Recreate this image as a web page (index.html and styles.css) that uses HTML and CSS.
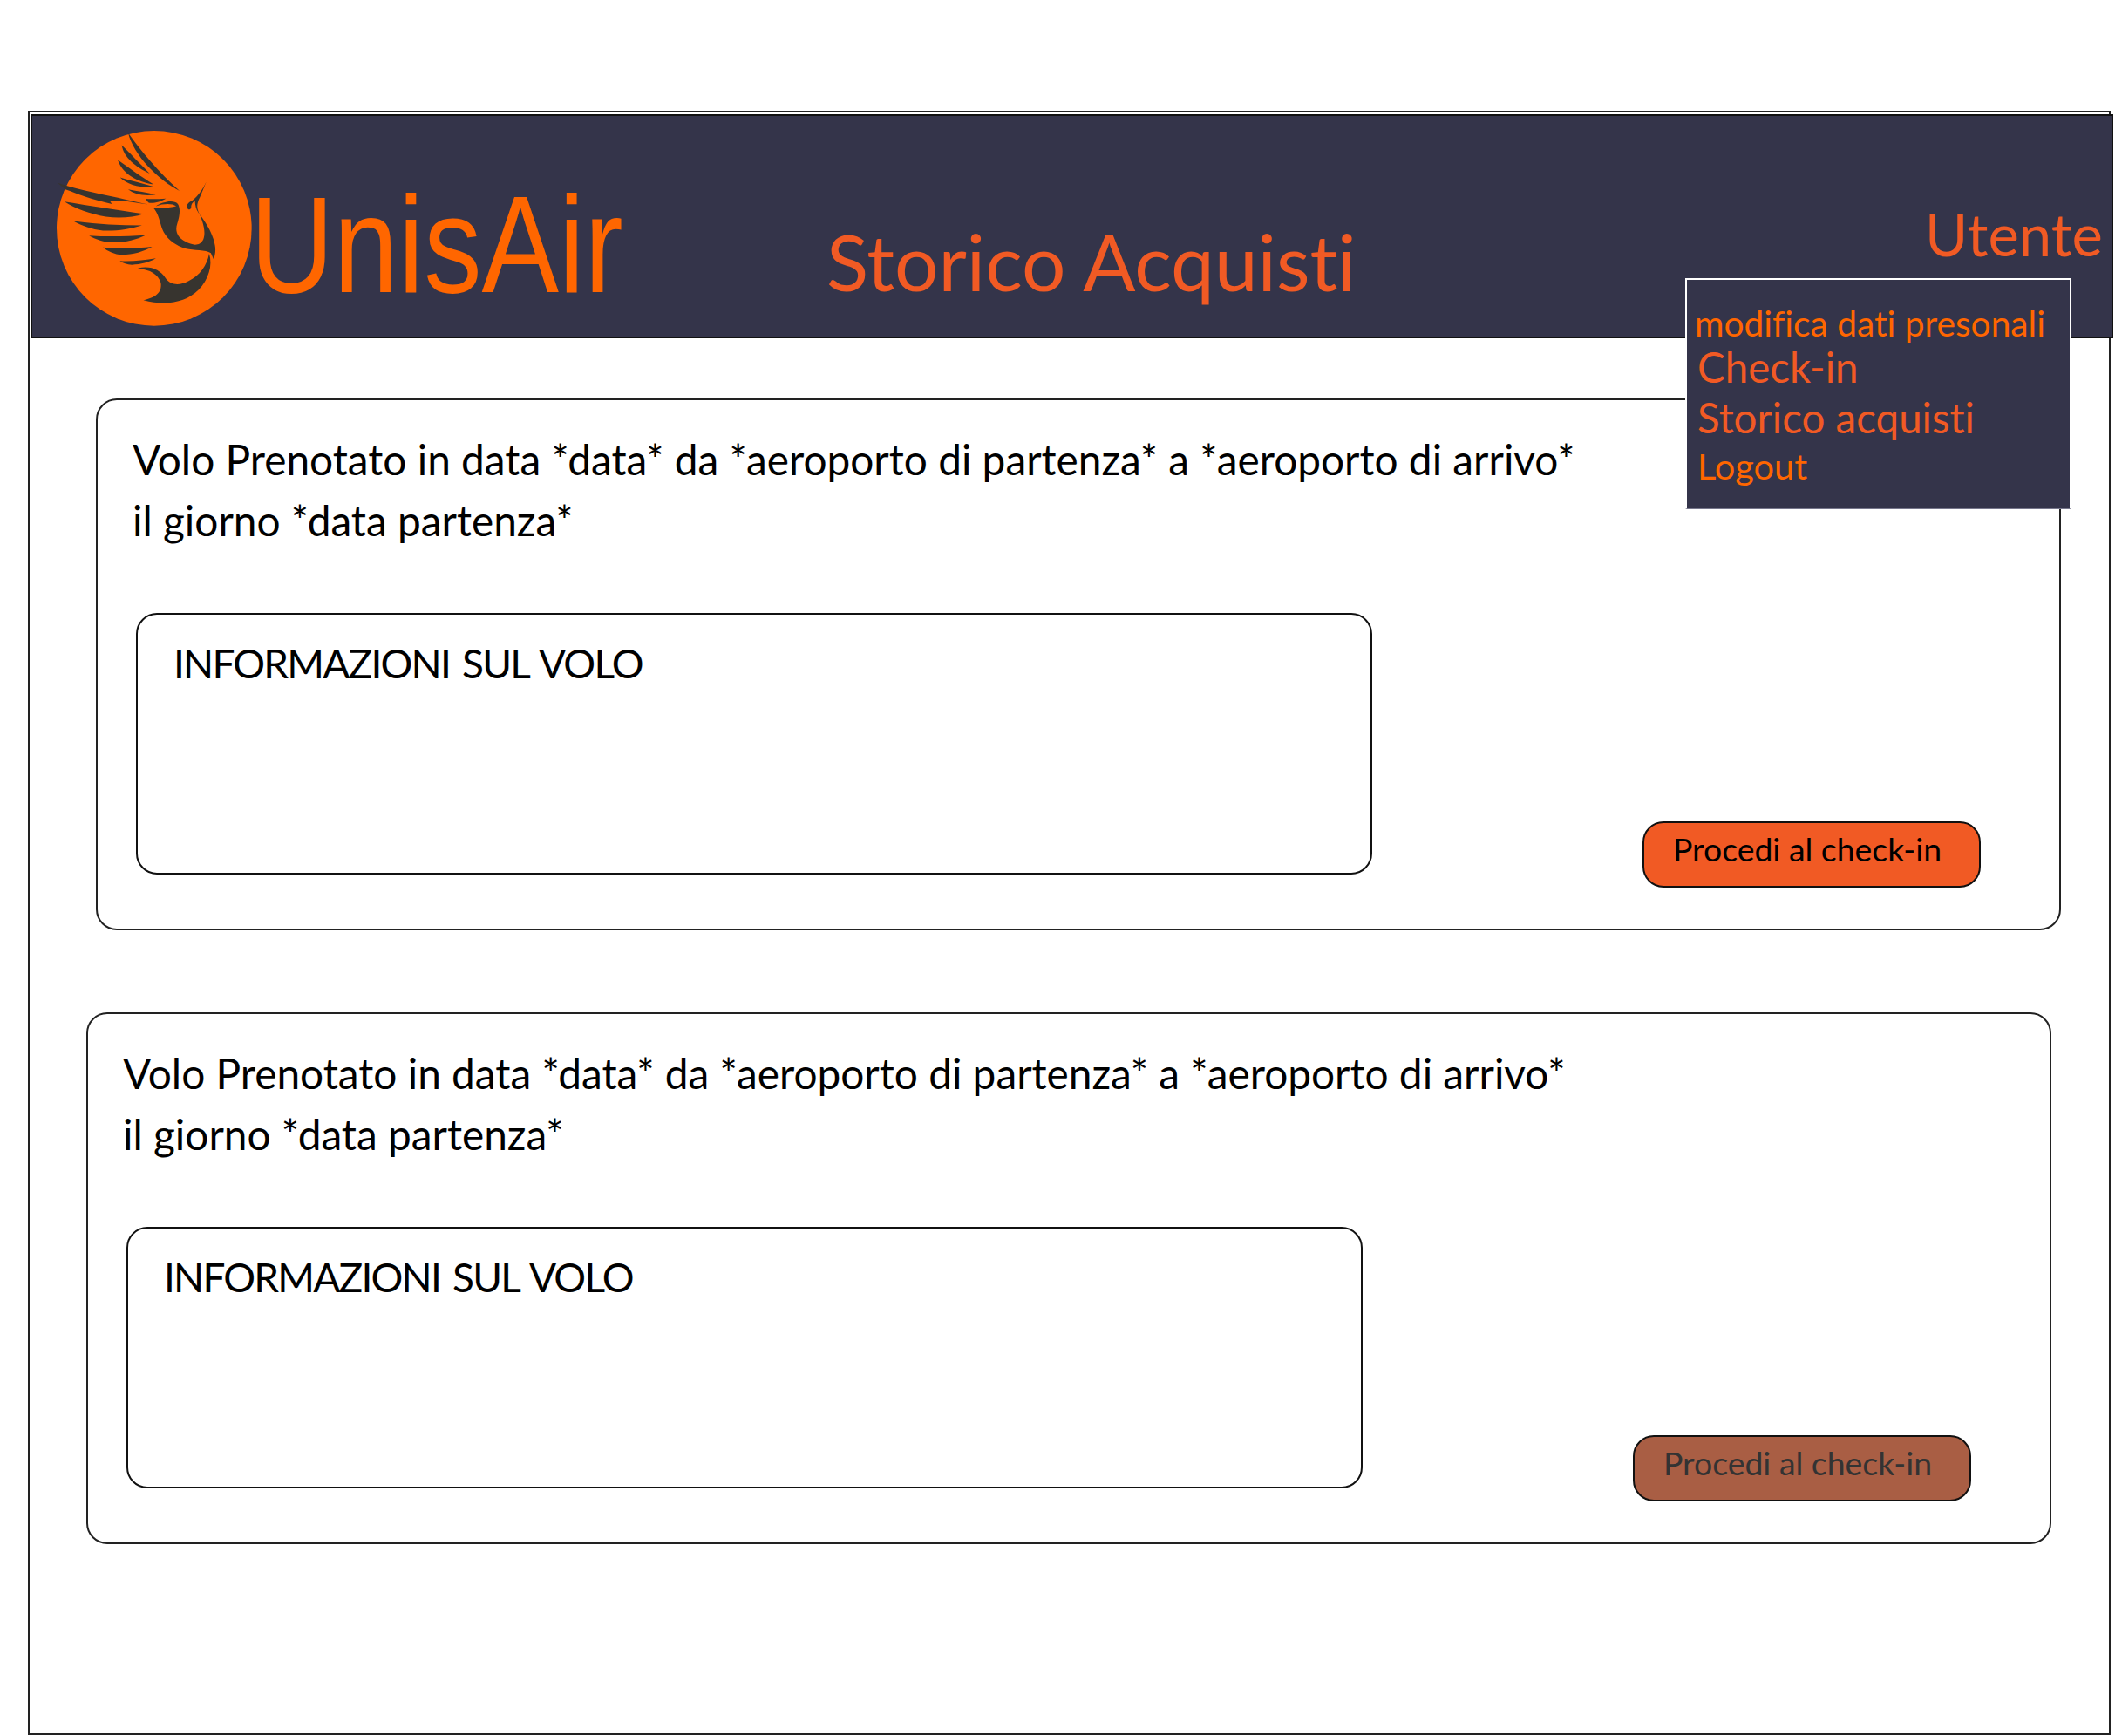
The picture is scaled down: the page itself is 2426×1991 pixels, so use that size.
FILE: index.html
```html
<!DOCTYPE html>
<html lang="it">
<head>
<meta charset="UTF-8" />
<meta name="viewport" content="width=device-width, initial-scale=1" />
<title>UnisAir - Storico Acquisti</title>
<link rel="stylesheet" href="styles.css">
</head>
<body>
<div class="frame">
  <header class="header">
    <svg class="logo" viewBox="45 55 675 675" aria-label="UnisAir logo">
      <circle cx="382" cy="392" r="337" fill="#ff6600"/>
      <g fill="#37342f">
        <path d="M292 62C335 125 400 200 470 263C400 228 310 140 292 62Z"/>
        <path d="M270 105C295 130 330 165 366 203C318 180 276 147 270 105Z"/>
        <path d="M256 155C290 180 335 212 380 240C325 232 272 205 256 155Z"/>
        <path d="M264 216C305 228 345 238 384 249C340 254 288 242 264 216Z"/>
        <path d="M292 258C325 264 355 268 387 276C350 282 315 276 292 258Z"/>
        <path d="M352 290C375 292 400 290 423 289C405 300 375 308 362 303Z"/>
        <path d="M48 235C130 262 210 275 285 293L360 310L285 298L228 296L236 308C170 295 115 272 75 258Z"/>
        <path d="M72 300C160 315 260 330 345 342C310 355 260 358 215 352C160 342 110 325 72 300Z"/>
        <path d="M103 367C180 378 260 382 340 382C300 395 250 402 205 400C165 395 130 383 103 367Z"/>
        <path d="M157 417C220 422 285 420 352 416C320 432 280 442 240 441C210 440 178 430 157 417Z"/>
        <path d="M205 458C260 464 320 462 375 456C345 472 310 484 270 484C245 482 222 472 205 458Z"/>
        <path d="M263 505C305 507 348 503 388 496C365 510 335 517 305 518C288 518 274 512 263 505Z"/>
        <path d="M325 530C370 520 402 535 422 565C440 590 470 590 500 575C540 555 565 520 572 480C585 520 570 570 535 605C490 650 420 660 345 640C385 632 410 615 405 580C395 550 370 535 325 530Z"/>
        <path d="M378 320C410 322 440 322 458 316C445 306 415 306 388 316C410 300 450 292 464 308C474 325 470 350 462 375C452 405 465 425 490 438C515 452 540 455 552 430C562 405 550 365 535 335C528 318 530 305 540 285L568 218C556 250 535 280 515 295C498 302 488 318 500 326C506 328 510 325 510 318C510 310 515 300 523 298C524 312 526 325 535 338C560 370 585 410 592 450C596 470 592 485 588 500L578 478C560 465 520 470 490 462C460 452 432 435 415 405C400 378 402 345 378 320Z"/>
      </g>
    </svg>
    <div class="brand">UnisAir</div>
    <h1 class="page-title">Storico Acquisti</h1>
    <div class="user">Utente</div>
  </header>

  <nav class="menu">
    <a class="menu-small">modifica dati presonali</a>
    <a class="menu-big">Check-in</a>
    <a class="menu-big">Storico acquisti</a>
    <a class="menu-logout">Logout</a>
  </nav>

  <section class="card card-first">
    <p class="summary">Volo Prenotato in data *data* da *aeroporto di partenza* a *aeroporto di arrivo*<br>il giorno *data partenza*</p>
    <div class="row">
      <div class="info">INFORMAZIONI SUL VOLO</div>
      <button class="checkin">Procedi al check-in</button>
    </div>
  </section>

  <section class="card card-second">
    <p class="summary">Volo Prenotato in data *data* da *aeroporto di partenza* a *aeroporto di arrivo*<br>il giorno *data partenza*</p>
    <div class="row">
      <div class="info">INFORMAZIONI SUL VOLO</div>
      <button class="checkin disabled">Procedi al check-in</button>
    </div>
  </section>
</div>
</body>
</html>
```
FILE: styles.css
```css
:root {
  --navy: #34344a;
  --orange: #ff6600;
  --red-orange: #f15a24;
  --font: 'Lato', 'Open Sans', sans-serif;
}

* {
  box-sizing: border-box;
}

body {
  margin: 0;
  background: #fff;
  color: #000;
  font-family: var(--font);
  font-variant-ligatures: none;
}

.frame {
  position: relative;
  width: 2389px;
  height: 1863px;
  margin: 127px 0 0 32px;
  padding-top: 2px;
  border: 2px solid #222;
}

/* header is a bit wider than the frame, like in the mockup */
.header {
  display: flex;
  align-items: flex-start;
  width: 2388px;
  height: 257px;
  margin-left: 2px;
  background: var(--navy);
  border: 2px solid #111;
  border-left-width: 1px;
}

.logo {
  flex: none;
  width: 224px;
  height: 224px;
  margin: 17px 1px 0 28px;
}

.brand {
  flex: none;
  width: 416px;
  margin: 56px 0 0 -3px;
  color: var(--orange);
  font-family: 'Liberation Sans', sans-serif;
  font-size: 158px;
  line-height: 182px;
  transform: scaleX(0.84);
  transform-origin: left top;
}

.page-title {
  margin: 117px 0 0 245px;
  color: var(--red-orange);
  font-size: 89px;
  font-weight: 400;
  line-height: 100px;
}

.user {
  margin: 95px 0 0 auto;
  padding-right: 10px;
  color: var(--red-orange);
  font-size: 67px;
  line-height: 80px;
}

.menu {
  position: absolute;
  z-index: 2;
  top: 190px;
  left: 1899px;
  display: flex;
  flex-direction: column;
  width: 443px;
  height: 265px;
  padding: 29px 9px 0;
  background: var(--navy);
  border: 2px solid #fff;
  border-bottom-width: 1px;
  border-bottom-color: #77778c;
}

.menu-small {
  color: var(--orange);
  font-size: 40.7px;
  line-height: 42px;
}

.menu-big {
  padding-left: 3px;
  color: var(--red-orange);
  font-size: 47.5px;
  line-height: 58px;
}

.menu-logout {
  padding-left: 3px;
  color: var(--orange);
  font-size: 41.5px;
  line-height: 52px;
}

.card {
  width: 2254px;
  height: 610px;
  background: #fff;
  border: 2px solid #222;
  border-radius: 24px;
}

.card-first {
  margin: 69px 0 0 76px;
}

.card-second {
  margin: 94px 0 0 65px;
}

.summary {
  margin: 0;
  padding: 33px 0 0 40px;
  font-size: 47.8px;
  line-height: 70px;
}

.row {
  display: flex;
  align-items: flex-end;
  justify-content: space-between;
  margin-top: 71px;
  padding: 0 90px 0 44px;
}

.info {
  width: 1418px;
  height: 300px;
  margin-bottom: 15px;
  padding: 28px 0 0 41px;
  border: 2px solid #111;
  border-radius: 24px;
  font-size: 46px;
  letter-spacing: -1.8px;
  word-spacing: 4px;
  line-height: 56px;
}

.checkin {
  width: 388px;
  height: 76px;
  padding: 0 0 12px 33px;
  background: var(--red-orange);
  border: 2px solid #111;
  border-radius: 24px;
  color: #000;
  font-family: var(--font);
  font-size: 37.4px;
  line-height: 60px;
  text-align: left;
}

.checkin.disabled {
  background: #a95e44;
  color: #333;
}
```
